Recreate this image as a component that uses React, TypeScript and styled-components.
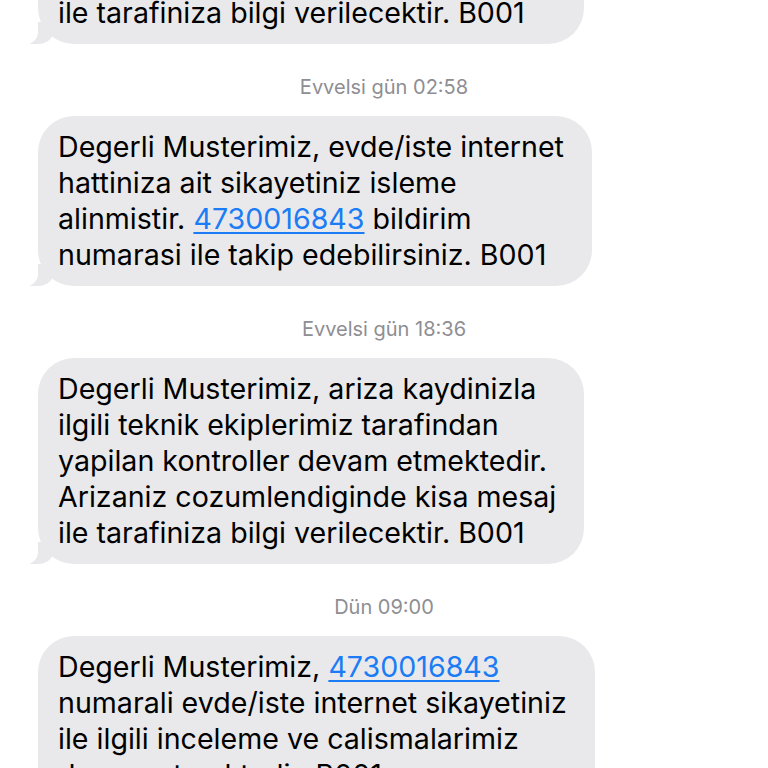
import React from 'react'
import styled, { createGlobalStyle } from 'styled-components'

const GlobalStyle = createGlobalStyle`
    html, body {
        margin: 0;
        padding: 0;
        background: #ffffff;
        overflow: hidden;
    }
    body {
        font-family: Inter, "Liberation Sans", Arial, sans-serif;
        -webkit-font-smoothing: antialiased;
    }
`

const Screen = styled.div`
    width: 768px;
    height: 768px;
    overflow: hidden;
    background: #fff;
`

// the thread is scrolled: the first bubble sits partly above the top edge
const Thread = styled.div`
    display: flex;
    flex-direction: column;
    align-items: flex-start;
    padding: 0 0 0 38px;
    margin-top: -162px;
`

const Stamp = styled.div`
    align-self: stretch;
    text-align: center;
    padding-right: 38px;
    margin: 33px 0 18px;
    font-size: 20px;
    line-height: 21px;
    color: #8e8e93;
`

const Bubble = styled.div`
    position: relative;
    background: #e9e9eb;
    color: #000;
    border-radius: 36px;
    padding: 13px 28px 13px 20px;
    font-size: 28.6px;
    line-height: 36px;
    white-space: nowrap;

    &::before {
        content: '';
        position: absolute;
        left: -8px;
        bottom: 0;
        width: 24px;
        height: 22px;
        background: #e9e9eb;
        border-bottom-right-radius: 16px 14px;
    }
    &::after {
        content: '';
        position: absolute;
        left: -18px;
        bottom: 0;
        width: 18px;
        height: 22px;
        background: #fff;
        border-bottom-right-radius: 12px;
    }
`

const Link = styled.a`
    color: #1b7cf5;
    text-decoration: underline;
    text-decoration-thickness: 1.5px;
    text-underline-offset: 3px;
`

const NUMBER = '4730016843'

const App: React.FC = () => {
    return (
        <Screen>
            <GlobalStyle />
            <Thread>
                <Bubble>
                    Degerli Musterimiz, ariza kaydinizla
                    <br />
                    ilgili teknik ekiplerimiz tarafindan
                    <br />
                    yapilan kontroller devam etmektedir.
                    <br />
                    Arizaniz cozumlendiginde kisa mesaj
                    <br />
                    ile tarafiniza bilgi verilecektir. B001
                </Bubble>

                <Stamp>Evvelsi gün 02:58</Stamp>
                <Bubble>
                    Degerli Musterimiz, evde/iste internet
                    <br />
                    hattiniza ait sikayetiniz isleme
                    <br />
                    alinmistir. <Link>{NUMBER}</Link> bildirim
                    <br />
                    numarasi ile takip edebilirsiniz. B001
                </Bubble>

                <Stamp>Evvelsi gün 18:36</Stamp>
                <Bubble>
                    Degerli Musterimiz, ariza kaydinizla
                    <br />
                    ilgili teknik ekiplerimiz tarafindan
                    <br />
                    yapilan kontroller devam etmektedir.
                    <br />
                    Arizaniz cozumlendiginde kisa mesaj
                    <br />
                    ile tarafiniza bilgi verilecektir. B001
                </Bubble>

                <Stamp>Dün 09:00</Stamp>
                <Bubble>
                    Degerli Musterimiz, <Link>{NUMBER}</Link>
                    <br />
                    numarali evde/iste internet sikayetiniz
                    <br />
                    ile ilgili inceleme ve calismalarimiz
                    <br />
                    devam etmektedir. B001
                </Bubble>
            </Thread>
        </Screen>
    )
}

export default App
